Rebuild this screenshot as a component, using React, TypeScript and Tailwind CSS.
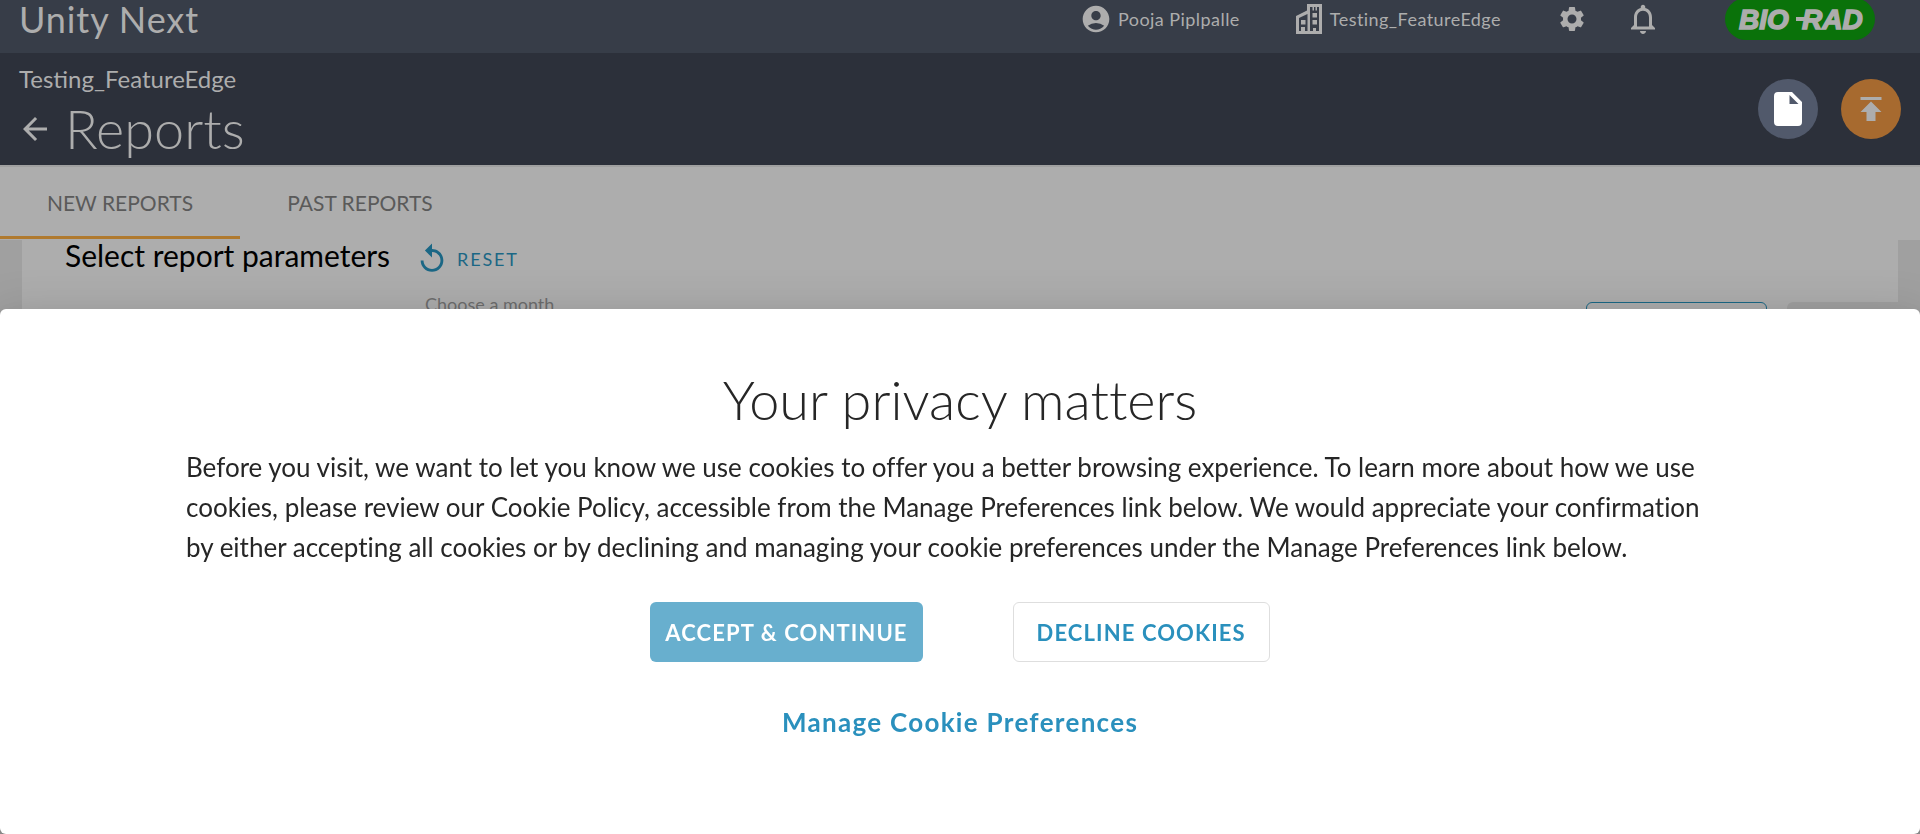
import React from "react";
import { MdAccountCircle, MdSettings, MdNotificationsNone, MdReplay, MdPublish, MdArrowBack } from "react-icons/md";

function BuildingIcon() {
  return (
    <svg viewBox="0 0 26 30" className="h-[30px] w-[26px]" fill="currentColor" aria-hidden="true">
      <path
        fillRule="evenodd"
        d="M0 12 L11 6.500 V0 H26 V30 H0 Z M3 14 V27 H5 V23 H9 V27 H11.500 V10 Z M14 3 V27 H17 V24 H20 V27 H23 V3 Z"
      />
      <path d="M5 16h4.500v4.500H5z M16.500 9h4.500v4.500h-4.500z M16.500 16h4.500v4.500h-4.500z M16.500 3h1.500v3.500h-1.500z M19.500 3h1.500v3.500h-1.500z" />
    </svg>
  );
}

function FileIcon() {
  return (
    <svg viewBox="0 0 28 34" className="h-[34px] w-7" aria-hidden="true">
      <path fill="#fff" fillRule="evenodd" d="M4 0 H18 L28 10 V30 A4 4 0 0 1 24 34 H4 A4 4 0 0 1 0 30 V4 A4 4 0 0 1 4 0 Z M15.500 3 V12 H24.500 Z" />
    </svg>
  );
}

function BioRadLogo() {
  return (
    <svg viewBox="0 0 150 42" className="h-[42px] w-[150px]" role="img" aria-label="Bio-Rad">
      <rect width="150" height="42" rx="21" fill="#0a720a" />
      <g fill="#adadad" fontFamily="Liberation Sans, Arial, sans-serif" fontWeight="700" fontStyle="italic" fontSize="28" stroke="#adadad" strokeWidth="1.5">
        <text x="14" y="31">BIO</text>
        <text x="77" y="31">RAD</text>
      </g>
      <rect x="71" y="19" width="12" height="4" fill="#adadad" />
    </svg>
  );
}

function TopBar() {
  return (
    <header className="flex h-[53px] items-start justify-between bg-[#373d48] pl-[19px] pr-[45px] text-[#adadad]">
      <span className="text-[36px] leading-[38px] tracking-wide">Unity Next</span>
      <div className="flex h-[38px] items-center">
        <button type="button" className="flex items-center gap-1.5 text-lg tracking-wide">
          <MdAccountCircle className="size-8" />
          Pooja Piplpalle
        </button>
        <button type="button" className="ml-14 flex items-center gap-2 text-lg tracking-wide">
          <BuildingIcon />
          Testing_FeatureEdge
        </button>
        <button type="button" aria-label="Settings" className="ml-14">
          <MdSettings className="size-[30px]" />
        </button>
        <button type="button" aria-label="Notifications" className="ml-[38px]">
          <MdNotificationsNone className="size-9" />
        </button>
        <a href="#" className="ml-16">
          <BioRadLogo />
        </a>
      </div>
    </header>
  );
}

function TitleBar() {
  return (
    <div className="flex h-28 items-center justify-between bg-[#2c303a] px-[19px] text-[#adadad]">
      <div className="pt-2">
        <p className="text-2xl">Testing_FeatureEdge</p>
        <div className="-ml-0.5 flex items-center gap-3">
          <button type="button" aria-label="Back">
            <MdArrowBack className="size-9" />
          </button>
          <h1 className="text-[54px] leading-[68px] font-light">Reports</h1>
        </div>
      </div>
      <div className="flex gap-[23px]">
        <button type="button" aria-label="Report file" className="flex size-[60px] items-center justify-center rounded-full bg-[#51596b]">
          <FileIcon />
        </button>
        <button type="button" aria-label="Upload" className="flex size-[60px] items-center justify-center rounded-full bg-[#a76a2f]">
          <MdPublish className="size-9" />
        </button>
      </div>
    </div>
  );
}

function Tabs() {
  return (
    <nav className="flex h-[75px] border-t-2 border-[#a0a0a0] bg-[#adadad] pb-px text-[21px] text-[#5a5a5a]">
      <a href="#new" className="flex w-60 items-center justify-center border-b-3 border-[#b07a2f] pt-0.5">
        NEW REPORTS
      </a>
      <a href="#past" className="flex w-60 items-center justify-center border-b-3 border-transparent pt-0.5">
        PAST REPORTS
      </a>
    </nav>
  );
}

function Parameters() {
  return (
    <main className="mx-[22px] min-h-[594px] bg-[#adadad] pl-[43px]">
      <div className="flex items-start gap-[25px]">
        <h2 className="text-[30px] leading-[30px] text-black">Select report parameters</h2>
        <button type="button" className="flex h-[38px] items-center gap-2 text-lg tracking-widest text-[#1b6785]">
          <MdReplay className="size-[34px]" />
          RESET
        </button>
      </div>
      <div className="mt-3 flex items-start justify-between">
        <label htmlFor="month" className="ml-[360px] text-lg text-[#6d6d6d]">
          Choose a month
        </label>
        <div className="flex gap-5">
          <button type="button" aria-label="Preview" className="mt-3 h-11 w-[181px] rounded-md border border-[#1b6785]" />
          <button type="button" aria-label="Create" className="mt-3 h-11 w-[111px] rounded-l-md bg-[#a0a0a0]" />
        </div>
      </div>
      <input id="month" className="ml-[360px] w-60 border-b border-[#6d6d6d]" />
    </main>
  );
}

function PrivacyDialog() {
  return (
    <section
      role="dialog"
      aria-labelledby="privacy-title"
      className="fixed inset-x-0 bottom-0 flex flex-col items-center rounded-md bg-white px-[186px] pt-14 pb-[95px] text-[#262626] shadow-[0_11px_15px_-7px_rgba(0,0,0,0.2),0_24px_38px_3px_rgba(0,0,0,0.14),0_9px_46px_8px_rgba(0,0,0,0.12)]"
    >
      <h2 id="privacy-title" className="text-[54px] leading-[70px] font-light [font-variant-ligatures:none]">
        Your privacy matters
      </h2>
      <p className="mt-3 pr-4 text-[26px] leading-10 [font-variant-ligatures:none]">
        Before you visit, we want to let you know we use cookies to offer you a better browsing experience. To learn more
        about how we use cookies, please review our Cookie Policy, accessible from the Manage Preferences link below. We
        would appreciate your confirmation by either accepting all cookies or by declining and managing your cookie
        preferences under the Manage Preferences link below.
      </p>
      <div className="mt-[35px] flex gap-[90px]">
        <button type="button" className="h-15 rounded-md bg-[#68afce] px-[15px] text-[22px] font-bold tracking-wider text-white">
          ACCEPT &amp; CONTINUE
        </button>
        <button type="button" className="h-15 rounded-md border border-[#dedede] px-[23px] text-[22px] font-bold tracking-wider text-[#2a90bd]">
          DECLINE COOKIES
        </button>
      </div>
      <a href="#preferences" className="mt-[43px] text-[26px] leading-[34px] font-bold tracking-wider text-[#2a90bd]">
        Manage Cookie Preferences
      </a>
    </section>
  );
}

export default function App() {
  return (
    <div className="h-screen overflow-hidden bg-[#a0a0a0] font-['Lato',sans-serif]">
      <TopBar />
      <TitleBar />
      <Tabs />
      <Parameters />
      <PrivacyDialog />
    </div>
  );
}
